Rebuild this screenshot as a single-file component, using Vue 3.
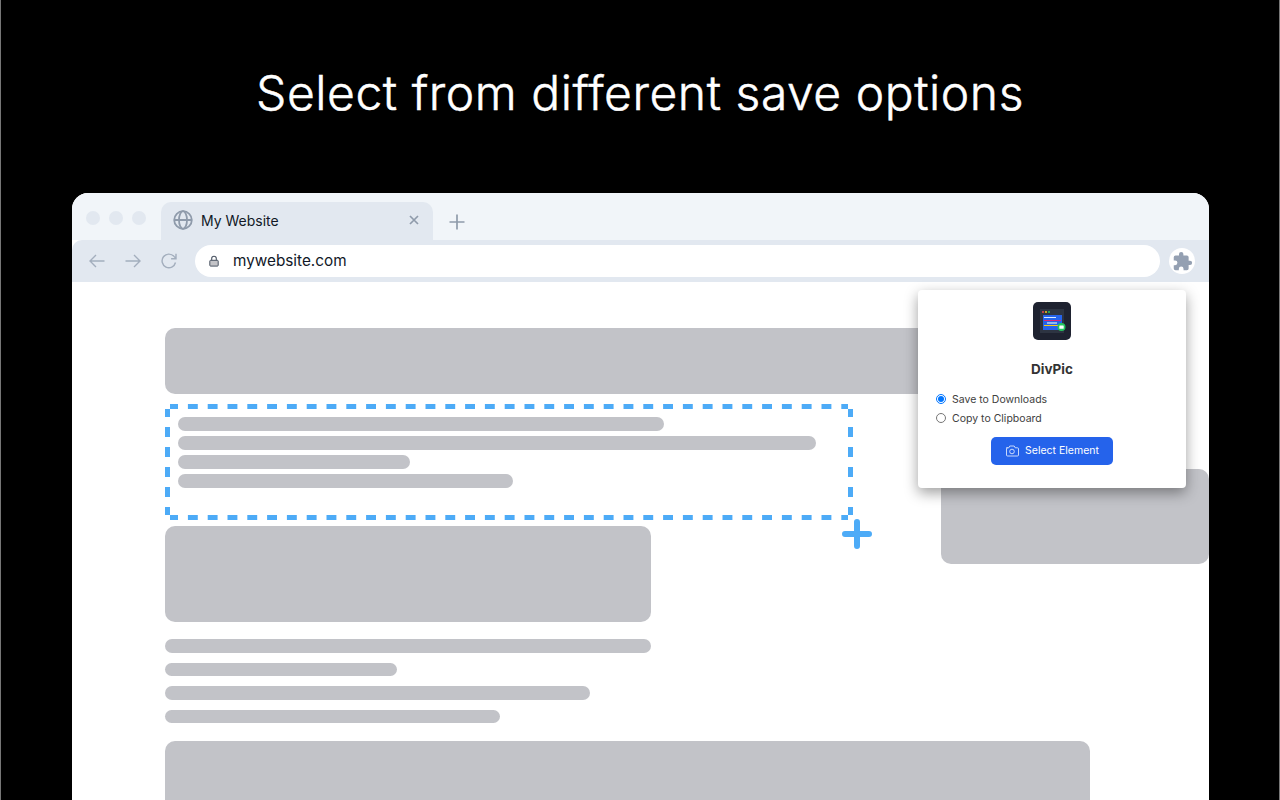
<script setup>
const lines1 = [486, 638, 232, 335]
const lines2 = [486, 232, 425, 335]
</script>

<template>
  <div class="page">
    <h1 class="title">Select from different save options</h1>
    <div class="window">
      <div class="titlebar">
        <div class="dots"><i></i><i></i><i></i></div>
        <div class="tab">
          <svg class="globe" width="20" height="20" viewBox="0 0 20 20" fill="none" stroke="#8f9bab" stroke-width="1.800">
            <circle cx="10" cy="10" r="8.800" />
            <ellipse cx="10" cy="10" rx="4" ry="8.800" />
            <path d="M1.200 10h17.600" />
          </svg>
          <span class="tab-title">My Website</span>
          <svg class="close" width="10" height="10" viewBox="0 0 10 10" fill="none" stroke="#8f9bab" stroke-width="1.700">
            <path d="M1 1l8 8M9 1l-8 8" />
          </svg>
        </div>
        <svg class="newtab" width="16" height="16" viewBox="0 0 16 16" fill="none" stroke="#8f9bab" stroke-width="1.700">
          <path d="M8 0.500v15M0.500 8h15" />
        </svg>
      </div>
      <div class="toolbar">
        <svg class="nav" width="18" height="18" viewBox="0 0 18 18" fill="none" stroke="#a3aebd" stroke-width="1.400">
          <path d="M16.500 9H2M8 3L2 9l6 6" />
        </svg>
        <svg class="nav" width="18" height="18" viewBox="0 0 18 18" fill="none" stroke="#a3aebd" stroke-width="1.400">
          <path d="M1.500 9H16M10 3l6 6-6 6" />
        </svg>
        <svg class="nav" width="18" height="18" viewBox="0 0 18 18" fill="none" stroke="#a3aebd" stroke-width="1.400">
          <path d="M15.500 10.500A6.800 6.800 0 1 1 14 4.400L16 6.500M16 1.800v4.900h-4.900" />
        </svg>
        <div class="address">
          <svg width="10" height="12" viewBox="0 0 10 12">
            <path d="M2.700 5.500V3.500a2.300 2.300 0 0 1 4.600 0V5.500" fill="none" stroke="#4b5563" stroke-width="1.100" />
            <rect x="0.800" y="5.300" width="8.400" height="5.800" rx=".8" fill="#c4c4c8" stroke="#4b5563" stroke-width="1" />
          </svg>
          <span>mywebsite.com</span>
        </div>
        <div class="ext">
          <svg width="21" height="21" viewBox="0 0 24 24" fill="#94a0b2">
            <path d="M20.500 11H19V7a2 2 0 0 0-2-2h-4V3.500a2.500 2.500 0 0 0-5 0V5H4a2 2 0 0 0-2 2v3.800h1.500a2.700 2.700 0 0 1 0 5.400H2V20a2 2 0 0 0 2 2h3.800v-1.500a2.700 2.700 0 0 1 5.400 0V22H17a2 2 0 0 0 2-2v-4h1.500a2.500 2.500 0 0 0 0-5z" />
          </svg>
        </div>
      </div>
      <div class="content">
        <div class="block hero"></div>
        <div class="selection">
          <svg class="marquee" width="688" height="116" viewBox="0 0 688 116" fill="none" stroke="#4dabf7" stroke-width="5">
            <path d="M5 2.500H683" stroke-dasharray="9.900 9.900" stroke-dashoffset="1.900" />
            <path d="M5 113.500H683" stroke-dasharray="9.900 9.900" stroke-dashoffset="1.900" />
            <path d="M2.500 5V111" stroke-dasharray="10 10" stroke-dashoffset="2" />
            <path d="M685.500 5V111" stroke-dasharray="10 10" stroke-dashoffset="2" />
          </svg>
          <div v-for="w in lines1" :key="w" class="line" :style="{ width: w + 'px' }"></div>
        </div>
        <div class="block card"></div>
        <div class="stack">
          <div v-for="w in lines2" :key="w" class="line" :style="{ width: w + 'px' }"></div>
        </div>
        <div class="block footer"></div>

        <svg class="cursor" width="32" height="32" viewBox="0 0 32 32" fill="none" stroke="#4dabf7" stroke-width="6" stroke-linecap="round">
          <path d="M16 4v24M4 16h24" />
        </svg>
        <div class="block side"></div>

        <div class="popup">
          <svg class="logo" width="38" height="38" viewBox="0 0 38 38">
            <rect width="38" height="38" rx="5" fill="#1e2230" />
            <rect x="7" y="7" width="24" height="24" fill="#2d3442" />
            <circle cx="10" cy="10" r="1" fill="#ef4444" />
            <circle cx="13" cy="10" r="1" fill="#facc15" />
            <circle cx="16" cy="10" r="1" fill="#22c55e" />
            <rect x="10" y="13" width="19" height="15" fill="#2563eb" />
            <rect x="11" y="15" width="12" height="1" fill="#dbeafe" />
            <rect x="11" y="18" width="17" height="1" fill="#db2777" />
            <rect x="14" y="20" width="10" height="2" fill="#93b8f0" />
            <rect x="11" y="23" width="15" height="1" fill="#facc15" />
            <circle cx="28.500" cy="25" r="4" fill="#22c55e" />
            <rect x="26.300" y="23.500" width="4.400" height="3.200" rx=".5" fill="#fff" />
          </svg>
          <div class="name">DivPic</div>
          <div class="options">
            <label class="option"><input type="radio" name="save" checked />Save to Downloads</label>
            <label class="option"><input type="radio" name="save" />Copy to Clipboard</label>
          </div>
          <button class="select" type="button">
            <svg width="14" height="12" viewBox="0 0 14 12" fill="none" stroke="#dbe6fd" stroke-width=".9">
              <path d="M1.500 2.800h2.300l1-1.800h4.400l1 1.800h2.300a1 1 0 0 1 1 1v6.200a1 1 0 0 1-1 1h-10a1 1 0 0 1-1-1V3.800a1 1 0 0 1 1-1z" />
              <circle cx="7" cy="6.500" r="2.300" />
            </svg>
            Select Element
          </button>
        </div>
      </div>
    </div>
  </div>
</template>

<style>
html, body { margin: 0; background: #000; overflow: hidden; }
</style>

<style scoped>
.page {
  height: 800px;
  box-sizing: border-box;
  background: #000;
  border-left: 1px solid #777;
  border-right: 1px solid #777;
  padding-left: 71px;
  overflow: hidden;
  font-family: Inter, "Liberation Sans", sans-serif;
}
.title {
  margin: 0 0 0 -71px;
  width: 1278px;
  height: 193px;
  padding-top: 64px;
  box-sizing: border-box;
  text-align: center;
  color: #fff;
  font-weight: 300;
  font-size: 48px;
  line-height: 58px;
  letter-spacing: 0.550px;
  -webkit-text-stroke: 0.500px #fff;
}
.window {
  width: 1137px;
  height: 607px;
  border-radius: 16px 16px 0 0;
  background: #fff;
  overflow: hidden;
  display: flex;
  flex-direction: column;
}
.titlebar {
  height: 47px;
  flex: none;
  background: #f1f5f9;
  display: flex;
  align-items: flex-start;
}
.dots {
  display: flex;
  gap: 9px;
  margin: 18px 0 0 14px;
}
.dots i {
  width: 14px;
  height: 14px;
  border-radius: 50%;
  background: #e2e8f0;
}
.tab {
  width: 272px;
  height: 38px;
  margin: 9px 0 0 15px;
  box-sizing: border-box;
  padding: 0 14px 2px 12px;
  background: #e2e8f0;
  border-radius: 10px 10px 0 0;
  display: flex;
  align-items: center;
  color: #111827;
  font-size: 14px;
}
.tab-title { margin-left: 8px; flex: 1; }
.newtab { margin: 21px 0 0 16px; }
.toolbar {
  height: 42px;
  flex: none;
  background: #e2e8f0;
  border-radius: 10px 0 0 0;
  display: flex;
  align-items: center;
  padding: 0 14px 0 16px;
  gap: 18px;
}
.nav { flex: none; }
.address {
  width: 965px;
  height: 32px;
  margin-left: -1px;
  box-sizing: border-box;
  padding: 0 0 1px 14px;
  background: #fff;
  border-radius: 16px;
  display: flex;
  align-items: center;
  gap: 14px;
  color: #111827;
  font-size: 15.300px;
}
.ext {
  width: 26px;
  height: 26px;
  margin-left: -9px;
  border-radius: 50%;
  background: #fff;
  display: flex;
  align-items: center;
  justify-content: center;
}
.content {
  position: relative;
  flex: 1;
  padding: 46px 0 0 93px;
}
.block { background: #c2c3c8; border-radius: 10px; }
.hero { width: 925px; height: 66px; }
.selection {
  position: relative;
  width: 688px;
  height: 116px;
  margin-top: 10px;
  box-sizing: border-box;
  padding: 13px;
  display: flex;
  flex-direction: column;
  gap: 5.500px;
}
.marquee {
  position: absolute;
  left: 0;
  top: 0;
  border-radius: 5px;
}
.line { height: 13.500px; border-radius: 7px; background: #c2c3c8; flex: none; }
.card { width: 486px; height: 96px; margin-top: 6px; }
.stack {
  margin-top: 17px;
  display: flex;
  flex-direction: column;
  gap: 10px;
}
.footer { width: 925px; height: 120px; margin-top: 18px; }
.cursor { position: absolute; left: 769px; top: 236px; }
.side {
  position: absolute;
  left: 869px;
  top: 187px;
  width: 268px;
  height: 95px;
}
.popup {
  position: absolute;
  left: 846px;
  top: 8px;
  width: 268px;
  height: 198px;
  box-sizing: border-box;
  padding-top: 12px;
  background: #fff;
  border-radius: 4px;
  box-shadow: 0 5px 14px rgba(0, 0, 0, 0.38);
  display: flex;
  flex-direction: column;
  align-items: center;
}
.logo { flex: none; }
.name {
  margin-top: 20px;
  font-size: 13.500px;
  line-height: 18px;
  font-weight: 700;
  color: #333;
}
.options {
  align-self: stretch;
  margin: 13px 0 0 18px;
  display: flex;
  flex-direction: column;
  gap: 3px;
}
.option {
  display: flex;
  align-items: center;
  height: 16px;
  font-size: 10.500px;
  color: #404040;
}
.option input {
  width: 10px;
  height: 10px;
  margin: 0 6px 0 0;
}
.select {
  width: 122px;
  height: 28px;
  margin-top: 11px;
  padding: 0 0 1px;
  border: 0;
  border-radius: 5px;
  background: #2563eb;
  color: #fff;
  font-family: inherit;
  font-size: 10.500px;
  display: flex;
  align-items: center;
  justify-content: center;
  gap: 6px;
}
</style>
